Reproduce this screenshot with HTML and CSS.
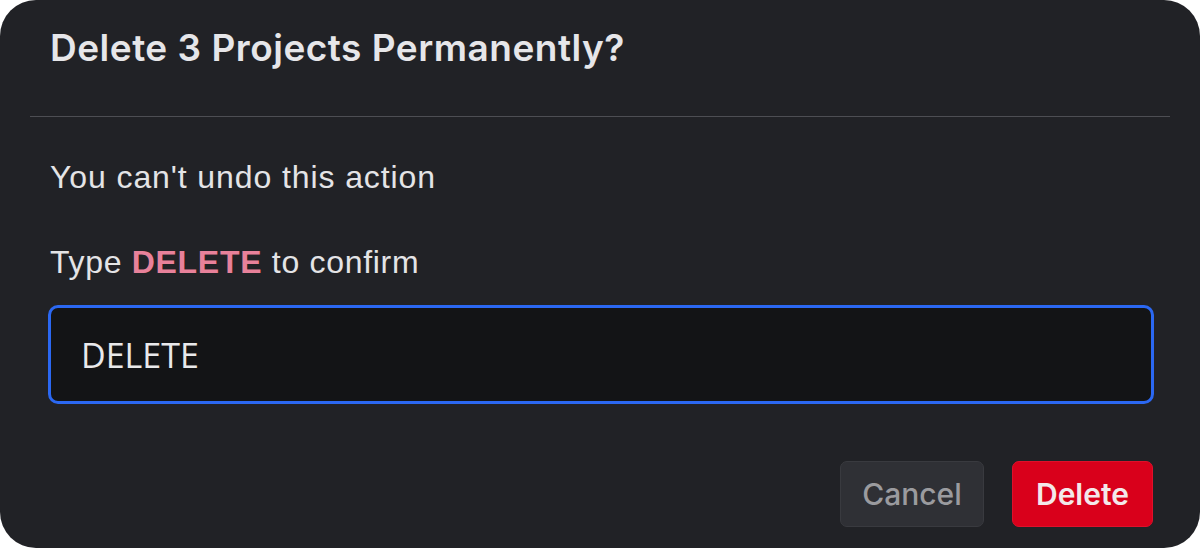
FILE: index.html
```html
<!DOCTYPE html>
<html>
<head>
<meta charset="utf-8">
<link rel="stylesheet" href="styles.css">
</head>
<body>
<div class="dialog">
  <div class="header">
    <h1 class="title">Delete 3 Projects Permanently?</h1>
  </div>
  <div class="divider"></div>
  <div class="content">
    <p class="text warn">You can't undo this action</p>
    <p class="text prompt">Type <strong class="keyword">DELETE</strong> to confirm</p>
    <div class="field">DELETE</div>
  </div>
  <div class="actions">
    <button class="btn btn-cancel">Cancel</button>
    <button class="btn btn-delete">Delete</button>
  </div>
</div>
</body>
</html>
```
FILE: styles.css
```css
html, body {
  margin: 0;
  padding: 0;
  background: #ffffff;
}
.dialog {
  width: 1200px;
  height: 548px;
  background: #212226;
  border-radius: 36px;
  display: flex;
  flex-direction: column;
  box-sizing: border-box;
  font-family: "Liberation Sans", Arial, sans-serif;
}
.header {
  padding: 26px 50px 46px;
}
.title {
  margin: 0;
  font-family: Inter, "Liberation Sans", sans-serif;
  font-weight: 600;
  font-size: 37px;
  line-height: 44px;
  color: #e6e6e9;
  letter-spacing: 0.5px;
}
.divider {
  height: 1px;
  margin: 0 30px;
  background: #4d4e53;
}
.content {
  padding: 42px 46px 0 48px;
}
.text {
  margin: 0 0 0 2px;
  font-size: 32px;
  line-height: 36px;
  color: #e4e4e6;
  letter-spacing: 0.9px;
}
.prompt {
  margin-top: 49px;
  letter-spacing: 0.7px;
}
.keyword {
  color: #e8819a;
  font-weight: 700;
}
.field {
  margin-top: 25px;
  height: 99px;
  box-sizing: border-box;
  border: 3px solid #2b68f2;
  border-radius: 10px;
  background: #131416;
  display: flex;
  align-items: center;
  padding-left: 30px;
  font-family: "Open Sans", sans-serif;
  font-size: 34px;
  color: #e9e9eb;
}
.actions {
  margin-top: auto;
  padding: 0 47px 21px 0;
  display: flex;
  justify-content: flex-end;
  gap: 28px;
}
.btn {
  height: 66px;
  border-radius: 7px;
  font-family: Inter, "Liberation Sans", sans-serif;
  font-size: 30px;
  padding: 0;
  cursor: pointer;
}
.btn-cancel {
  width: 144px;
  background: #2f3035;
  border: 1px solid #393a3f;
  color: #9b9b9f;
  font-weight: 500;
}
.btn-delete {
  width: 141px;
  background: #d9001b;
  border: 1px solid #e0102a;
  color: #f3e8ea;
  font-weight: 600;
}
```
